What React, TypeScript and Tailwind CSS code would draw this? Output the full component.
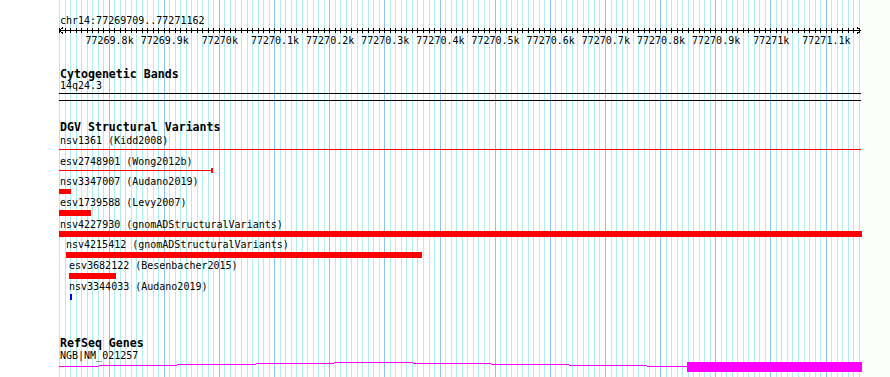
import React from "react";

// 146 grid lines at 10bp steps, every tenth one is a 100bp line
const GRID = Array.from({ length: 146 }, (_, i) => ({
  x: Math.floor(59.5 + i * 5.515) + 0.5,
  major: i % 10 === 9,
}));

const LABELS = [
  "77269.8k",
  "77269.9k",
  "77270k",
  "77270.1k",
  "77270.2k",
  "77270.3k",
  "77270.4k",
  "77270.5k",
  "77270.6k",
  "77270.7k",
  "77270.8k",
  "77270.9k",
  "77271k",
  "77271.1k",
];

const GENE_STEPS: [number, number, number][] = [
  [59, 99, 4],
  [99, 177, 3],
  [177, 256, 2],
  [256, 334, 1],
  [334, 413, 0],
  [413, 491, 1],
  [491, 569, 2],
  [569, 647, 3],
  [647, 687, 4],
];

const Label = ({ children, indent = "pl-[60px]" }: { children: React.ReactNode; indent?: string }) => (
  <div className={`h-[12px] leading-[12px] text-[10px] whitespace-pre ${indent}`}>{children}</div>
);

const Title = ({ children }: { children: React.ReactNode }) => (
  <div className="h-[12px] leading-[12px] text-[11.6px] font-bold whitespace-pre pl-[60px]">{children}</div>
);

const Grid = () => (
  <svg className="absolute left-0 top-0" width={862} height={377} shapeRendering="crispEdges">
    {GRID.map((g, i) => (
      <line
        key={i}
        x1={g.x}
        x2={g.x}
        y1={0}
        y2={377}
        stroke={g.major ? "#87c4ee" : "#aeeeee"}
        strokeWidth={1}
      />
    ))}
  </svg>
);

const Ruler = () => (
  <svg width={862} height={8} shapeRendering="crispEdges" className="block">
    <line x1={59} x2={861} y1={3.5} y2={3.5} stroke="#000" />
    {GRID.map((g, i) => (
      <line key={i} x1={g.x} x2={g.x} y1={1} y2={6} stroke="#000" />
    ))}
    <polyline points="63,0.5 59.5,3.5 63,6.5" fill="none" stroke="#000" />
    <polyline points="857,0.5 860.5,3.5 857,6.5" fill="none" stroke="#000" />
  </svg>
);

const GeneGlyph = () => (
  <svg width={862} height={10} shapeRendering="crispEdges" className="block">
    {GENE_STEPS.map(([a, b, y], i) => (
      <rect key={i} x={a} y={y} width={b - a} height={1} fill="#ff00ff" />
    ))}
    <rect x={687} y={0} width={175} height={10} fill="#ff00ff" />
  </svg>
);

export default function App() {
  return (
    <div className="w-[890px] h-[377px] overflow-hidden bg-[#fcfefc]">
      <div className="relative w-[862px] h-[377px] bg-white font-['DejaVu_Sans_Mono',monospace] text-black">
        <Grid />
        <div className="relative flex flex-col">
          <div className="h-[15px]" />
          <Label>chr14:77269709..77271162</Label>
          <Ruler />
          <div className="flex pl-[82px] h-[12px] leading-[12px] text-[10px]">
            {LABELS.map((l) => (
              <div key={l} className="w-[55.15px] shrink-0 text-center whitespace-nowrap">
                {l}
              </div>
            ))}
          </div>

          <div className="h-[21px]" />
          <Title>Cytogenetic Bands</Title>
          <Label>14q24.3</Label>
          <div className="mt-[1px] ml-[59px] w-[802px] h-[1px] bg-black" />
          <div className="mt-[6px] ml-[59px] w-[802px] h-[1px] bg-black" />

          <div className="h-[20px]" />
          <Title>DGV Structural Variants</Title>
          <div className="mt-[2px]">
            <Label>nsv1361 (Kidd2008)</Label>
          </div>
          <div className="mt-[2px] ml-[59px] w-[802px] h-[1px] bg-[#ff0000]" />

          <div className="mt-[6px]">
            <Label>esv2748901 (Wong2012b)</Label>
          </div>
          <div className="flex items-center h-[5px] ml-[59px]">
            <div className="w-[152px] h-[1px] bg-[#ff0000]" />
            <div className="w-[2px] h-[5px] bg-[#ff0000]" />
          </div>

          <div className="mt-[3px]">
            <Label>nsv3347007 (Audano2019)</Label>
          </div>
          <div className="mt-[1px] ml-[59px] w-[12px] h-[5px] bg-[#ff0000]" />

          <div className="mt-[3px]">
            <Label>esv1739588 (Levy2007)</Label>
          </div>
          <div className="mt-[1px] ml-[59px] w-[32px] h-[6px] bg-[#ff0000]" />

          <div className="mt-[3px]">
            <Label>nsv4227930 (gnomADStructuralVariants)</Label>
          </div>
          <div className="ml-[59px] w-[803px] h-[6px] bg-[#ff0000]" />

          <div className="mt-[2px]">
            <Label indent="pl-[66px]">nsv4215412 (gnomADStructuralVariants)</Label>
          </div>
          <div className="mt-[1px] ml-[66px] w-[356px] h-[6px] bg-[#ff0000]" />

          <div className="mt-[2px]">
            <Label indent="pl-[69px]">esv3682122 (Besenbacher2015)</Label>
          </div>
          <div className="mt-[1px] ml-[69px] w-[47px] h-[6px] bg-[#ff0000]" />

          <div className="mt-[2px]">
            <Label indent="pl-[69px]">nsv3344033 (Audano2019)</Label>
          </div>
          <div className="mt-[1px] ml-[70px] w-[2px] h-[6px] bg-[#0000ff]" />

          <div className="h-[37px]" />
          <Title>RefSeq Genes</Title>
          <div className="mt-[1px]">
            <Label>NGB|NM_021257</Label>
          </div>
          <GeneGlyph />
        </div>
      </div>
    </div>
  );
}
